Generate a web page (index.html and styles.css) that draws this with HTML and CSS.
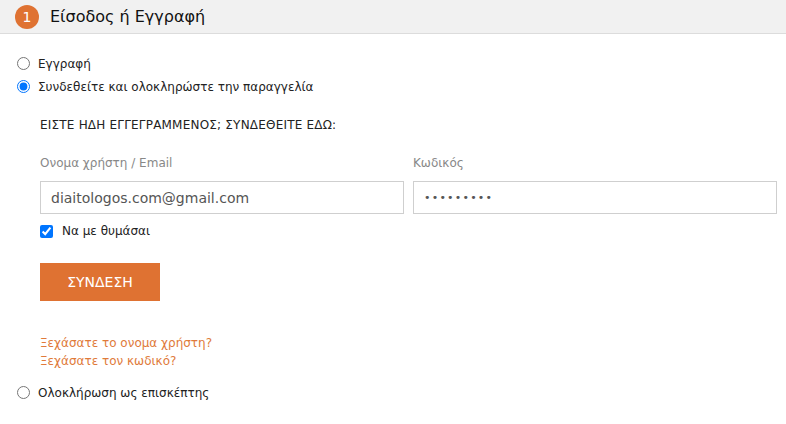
FILE: index.html
```html
<!DOCTYPE html>
<html lang="el">
<head>
<meta charset="utf-8">
<title>Είσοδος ή Εγγραφή</title>
<link rel="stylesheet" href="styles.css">
</head>
<body>
<div class="step">
  <div class="step-head">
    <span class="step-num">1</span>
    <span class="step-title">Είσοδος ή Εγγραφή</span>
  </div>
  <div class="step-body">
    <label class="radio-row"><input type="radio" name="mode"> <span>Εγγραφή</span></label>
    <label class="radio-row"><input type="radio" name="mode" checked> <span>Συνδεθείτε και ολοκληρώστε την παραγγελία</span></label>

    <div class="login">
      <div class="login-title">ΕΙΣΤΕ ΗΔΗ ΕΓΓΕΓΡΑΜΜΕΝΟΣ; ΣΥΝΔΕΘΕΙΤΕ ΕΔΩ:</div>
      <div class="fields">
        <div class="field">
          <label class="field-label">Ονομα χρήστη / Email</label>
          <input class="text-input" type="text" value="diaitologos.com@gmail.com">
        </div>
        <div class="field">
          <label class="field-label">Κωδικός</label>
          <input class="text-input pass" type="password" value="123456789">
        </div>
      </div>
      <label class="check-row"><input type="checkbox" checked> <span>Να με θυμάσαι</span></label>
      <button class="btn" type="button">ΣΥΝΔΕΣΗ</button>
      <div class="links">
        <a href="#">Ξεχάσατε το ονομα χρήστη?</a>
        <a href="#">Ξεχάσατε τον κωδικό?</a>
      </div>
    </div>

    <label class="radio-row"><input type="radio" name="mode"> <span>Ολοκλήρωση ως επισκέπτης</span></label>
  </div>
</div>
</body>
</html>
```

FILE: styles.css
```css
html, body {
  margin: 0;
  padding: 0;
  background: #fff;
}
body {
  font-family: "DejaVu Sans", Verdana, sans-serif;
  font-size: 12px;
  color: #222;
}
.step-head {
  display: flex;
  align-items: center;
  height: 33px;
  background: #f1f1f1;
  border-bottom: 1px solid #dcdcdc;
  padding-left: 15px;
}
.step-num {
  width: 24px;
  height: 24px;
  border-radius: 50%;
  background: #df7232;
  color: #fff;
  font-size: 14px;
  display: flex;
  align-items: center;
  justify-content: center;
  margin-right: 11px;
}
.step-title {
  font-size: 16px;
  color: #111;
}
.step-body {
  padding: 18px 9px 0 17px;
}
.radio-row {
  display: flex;
  align-items: center;
  height: 23px;
}
.radio-row input {
  margin: 0 8px 0 0;
  width: 13px;
  height: 13px;
}
.login {
  padding: 19px 0 11px 23px;
}
.login-title {
  line-height: 16px;
  letter-spacing: 0.2px;
}
.fields {
  display: grid;
  grid-template-columns: 1fr 1fr;
  column-gap: 9px;
  margin-top: 22px;
}
.field-label {
  display: block;
  color: #888;
  line-height: 16px;
  margin-bottom: 10px;
}
.text-input {
  box-sizing: border-box;
  width: 100%;
  height: 33px;
  border: 1px solid #cfcfcf;
  padding: 0 10px;
  font-family: "DejaVu Sans", Verdana, sans-serif;
  font-size: 14px;
  color: #555;
  background: #fff;
  margin: 0;
  outline: none;
}
.text-input.pass {
  font-size: 11px;
  letter-spacing: 1.2px;
}
.check-row {
  display: flex;
  align-items: center;
  margin-top: 10px;
  height: 14px;
}
.check-row input {
  margin: 0 9px 0 0;
  width: 13px;
  height: 13px;
}
.btn {
  display: block;
  margin-top: 25px;
  width: 120px;
  height: 38px;
  border: none;
  background: #df7232;
  color: #fff;
  font-family: "DejaVu Sans", Verdana, sans-serif;
  font-size: 14px;
  padding: 0;
  cursor: pointer;
}
.links {
  margin-top: 33px;
  display: flex;
  flex-direction: column;
}
.links a {
  color: #e07a3a;
  text-decoration: none;
  line-height: 18px;
}
```
